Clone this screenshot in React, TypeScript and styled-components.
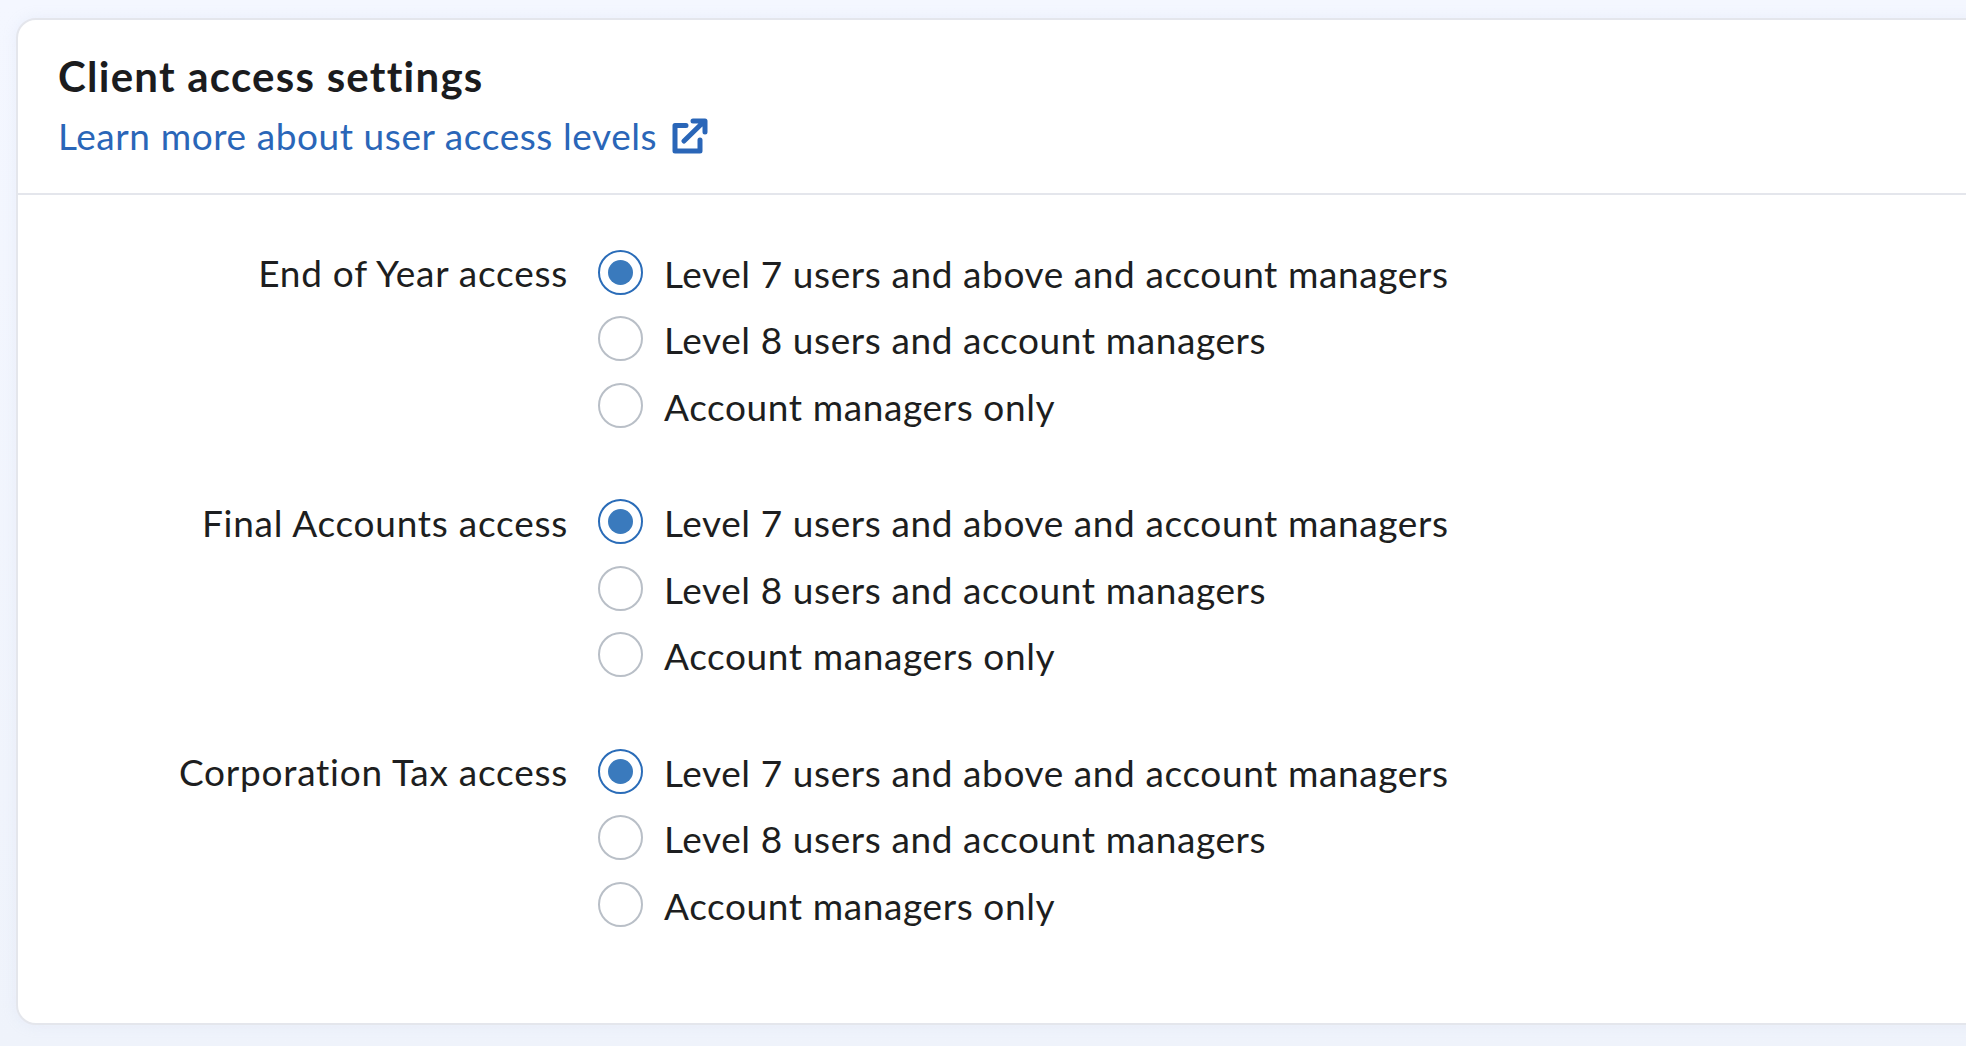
import styled, { createGlobalStyle } from 'styled-components';

const Global = createGlobalStyle`
	html, body {
		margin: 0;
		height: 100%;
		overflow: hidden;
	}
	body {
		font-family: "Lato", "Liberation Sans", sans-serif;
		background: linear-gradient(180deg, #f4f7ff 0%, #eff3fb 100%);
		color: #1d1e20;
	}
`;

const Page = styled.div`
	width: 1966px;
	height: 1046px;
	padding: 18px 0 0 16px;
	box-sizing: border-box;
	overflow: hidden;
`;

const Card = styled.section`
	width: 2000px;
	height: 1007px;
	box-sizing: border-box;
	background: white;
	border: 2px solid #e4e6ec;
	border-radius: 20px;
	box-shadow: 0 0 14px rgba(190, 200, 225, 0.18);
`;

const Header = styled.header`
	height: 175px;
	box-sizing: border-box;
	padding: 31px 0 0 40px;
	border-bottom: 2px solid #e4e6ec;
`;

const Title = styled.h1`
	margin: 0;
	font-size: 42px;
	line-height: 50px;
	font-weight: 700;
	letter-spacing: 1.25px;
	color: #1b1c1e;
`;

const HelpLink = styled.a`
	display: flex;
	align-items: center;
	gap: 15px;
	margin-top: 10px;
	font-size: 37px;
	letter-spacing: 0.58px;
	line-height: 50px;
	color: #2a66b8;
	text-decoration: none;
`;

const Groups = styled.div`
	display: flex;
	flex-direction: column;
	gap: 50px;
	padding-top: 45px;
`;

const Group = styled.div`
	display: grid;
	grid-template-columns: 550px 1fr;
	column-gap: 30px;
`;

const GroupLabel = styled.div`
	text-align: right;
	font-size: 37px;
	letter-spacing: 0.75px;
	line-height: 66.5px;
`;

const Options = styled.div`
	display: flex;
	flex-direction: column;
`;

const Option = styled.label`
	display: flex;
	align-items: center;
	gap: 21px;
	height: 66.5px;
	font-size: 37px;
	letter-spacing: 0.6px;
`;

const Radio = styled.span<{ checked?: boolean }>`
	width: 45px;
	height: 45px;
	box-sizing: border-box;
	flex: none;
	display: flex;
	align-items: center;
	justify-content: center;
	border-radius: 50%;
	border: 2px solid ${props => (props.checked ? '#2a6cb8' : '#b9bfc7')};
	margin-top: -2px;

	&::after {
		content: '';
		display: ${props => (props.checked ? 'block' : 'none')};
		width: 25px;
		height: 25px;
		border-radius: 50%;
		background: #3a7abd;
	}
`;

const ExternalIcon = () => (
	<svg width="36" height="36" viewBox="0 0 36 36" fill="none" stroke="#2a66b8" strokeWidth="5" strokeLinecap="round" strokeLinejoin="round">
		<path d="M14 7.5H3V33H28V22" />
		<path d="M12 23L32 3.5M21 3H33V14" />
	</svg>
);

const levels = ['Level 7 users and above and account managers', 'Level 8 users and account managers', 'Account managers only'];
const groups = ['End of Year access', 'Final Accounts access', 'Corporation Tax access'];

const App = () => {
	return (
		<Page>
			<Global />
			<Card>
				<Header>
					<Title>Client access settings</Title>
					<HelpLink href="#">
						Learn more about user access levels
						<ExternalIcon />
					</HelpLink>
				</Header>
				<Groups>
					{groups.map(group => (
						<Group key={group}>
							<GroupLabel>{group}</GroupLabel>
							<Options>
								{levels.map((level, i) => (
									<Option key={level}>
										<Radio checked={i === 0} />
										{level}
									</Option>
								))}
							</Options>
						</Group>
					))}
				</Groups>
			</Card>
		</Page>
	);
};

export default App;
